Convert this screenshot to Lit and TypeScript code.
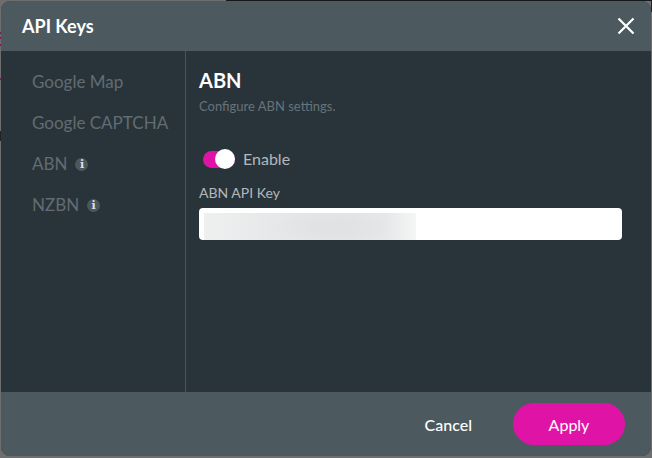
import { LitElement, html, css } from "lit";
import { customElement } from "lit/decorators.js";

@customElement("app-root")
export class AppRoot extends LitElement {
  static styles = css`
    :host {
      display: block;
      width: 652px;
      height: 458px;
      background:
        linear-gradient(#15191b, #15191b) 226px 0 / 426px 1px no-repeat,
        linear-gradient(#7a1a60, #7a1a60) 0 32px / 1px 2px no-repeat,
        linear-gradient(#7a1a60, #7a1a60) 0 37px / 1px 2px no-repeat,
        linear-gradient(#7a1a60, #7a1a60) 0 44px / 1px 2px no-repeat,
        linear-gradient(#7a1a60, #7a1a60) 0 78px / 1px 2px no-repeat,
        linear-gradient(#222, #222) 0 131px / 1px 10px no-repeat,
        linear-gradient(#222, #222) 651px 0 / 1px 12px no-repeat,
        #6e6e6e;
      font-family: "Lato", "Liberation Sans", sans-serif;
      overflow: hidden;
    }
    .modal {
      box-sizing: border-box;
      margin: 1px 1px 0 1px;
      width: 650px;
      height: 455px;
      border-radius: 9px;
      overflow: hidden;
      display: flex;
      flex-direction: column;
      background: #29343a;
    }
    .header {
      height: 50px;
      flex: none;
      background: #4c5a60;
      display: flex;
      align-items: center;
      justify-content: space-between;
      padding: 0 15px 0 21px;
    }
    .title {
      font-size: 18px;
      font-weight: 700;
      color: #fff;
    }
    .close {
      width: 20px;
      height: 20px;
      display: block;
    }
    .body {
      flex: 1;
      display: flex;
      min-height: 0;
    }
    .side {
      flex: none;
      border-right: 1px solid #4a555b;
      padding: 19px 0 0 31px;
      width: 153px;
      display: flex;
      flex-direction: column;
      gap: 17px;
    }
    .item {
      font-size: 17px;
      line-height: 24px;
      color: #626c72;
      display: flex;
      align-items: center;
      white-space: nowrap;
    }
    .info {
      margin-left: 8px;
      width: 13px;
      height: 13px;
      border-radius: 50%;
      background: #4c575d;
      color: #dfe2e4;
      font-family: "DejaVu Serif", serif;
      font-size: 11px;
      font-weight: 700;
      line-height: 13px;
      text-align: center;
    }
    .main {
      flex: 1;
      padding: 16px 29px 0 13px;
      display: flex;
      flex-direction: column;
    }
    h2 {
      margin: 0;
      font-size: 20px;
      line-height: 26px;
      font-weight: 700;
      color: #fff;
    }
    .sub {
      margin-top: 5px;
      font-size: 13px;
      line-height: 16px;
      color: #66737a;
    }
    .toggle-row {
      margin-top: 34px;
      display: flex;
      align-items: center;
      gap: 8px;
      margin-left: 4px;
      height: 22px;
    }
    .toggle {
      position: relative;
      width: 32px;
      height: 17px;
      border-radius: 9px;
      background: #df14a6;
    }
    .knob {
      position: absolute;
      right: 0;
      top: -2px;
      width: 20px;
      height: 20px;
      border-radius: 50%;
      background: #fff;
    }
    .enable {
      font-size: 16px;
      color: #b3b8bb;
      margin-bottom: 2px;
    }
    label {
      margin-top: 14px;
      font-size: 14px;
      line-height: 18px;
      color: #b3b8bb;
    }
    .field {
      margin-top: 6px;
      height: 32px;
      border-radius: 4px;
      background: #fff;
      padding: 5px 0 0 5px;
      box-sizing: border-box;
    }
    .blur {
      width: 212px;
      height: 27px;
      background:
        radial-gradient(ellipse 60px 16px at 130px 14px, #e0e1e2 0%, rgba(224, 225, 226, 0) 100%),
        linear-gradient(90deg, #eeefef 0%, #e6e7e8 35%, #e3e4e5 65%, #e6e7e8 85%, #f4f5f5 100%);
    }
    .footer {
      height: 64px;
      flex: none;
      background: #4c5a60;
      display: flex;
      align-items: center;
      justify-content: flex-end;
      padding: 0 26px 0 0;
      gap: 41px;
    }
    .cancel {
      font-size: 16px;
      color: #fff;
      font-weight: 500;
    }
    .apply {
      width: 112px;
      height: 42px;
      border-radius: 21px;
      background: #df14a6;
      color: #fff;
      font-size: 16px;
      display: flex;
      align-items: center;
      justify-content: center;
    }
  `;

  render() {
    return html`
      <div class="modal">
        <div class="header">
          <div class="title">API Keys</div>
          <svg class="close" viewBox="0 0 20 20" fill="none" stroke="#fff" stroke-width="2.2">
            <path d="M2.5 2.5 L17.5 17.5 M17.5 2.5 L2.5 17.5"></path>
          </svg>
        </div>
        <div class="body">
          <div class="side">
            <div class="item">Google Map</div>
            <div class="item">Google CAPTCHA</div>
            <div class="item">ABN<span class="info">i</span></div>
            <div class="item">NZBN<span class="info">i</span></div>
          </div>
          <div class="main">
            <h2>ABN</h2>
            <div class="sub">Configure ABN settings.</div>
            <div class="toggle-row">
              <div class="toggle"><div class="knob"></div></div>
              <div class="enable">Enable</div>
            </div>
            <label>ABN API Key</label>
            <div class="field"><div class="blur"></div></div>
          </div>
        </div>
        <div class="footer">
          <div class="cancel">Cancel</div>
          <div class="apply">Apply</div>
        </div>
      </div>
    `;
  }
}
